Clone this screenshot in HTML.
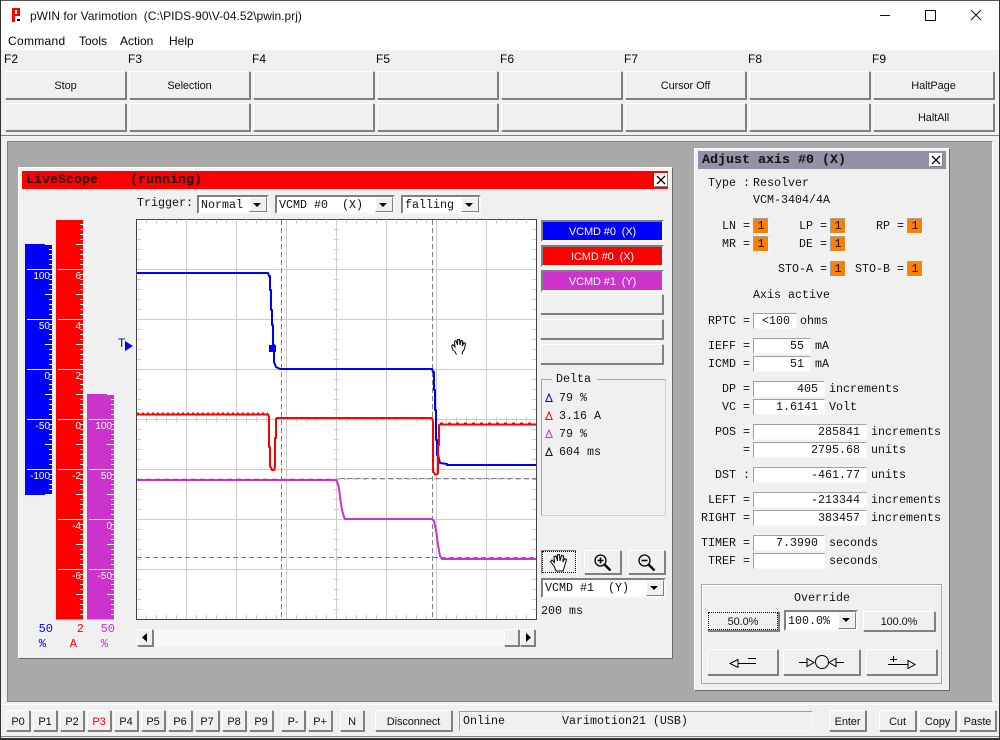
<!DOCTYPE html>
<html><head><meta charset="utf-8"><title>pWIN for Varimotion</title>
<style>
html,body{margin:0;padding:0;width:1000px;height:740px;overflow:hidden;background:#f0f0f0}
body{position:relative;font-family:"Liberation Sans",sans-serif;font-size:12px;color:#000}
div,span{box-sizing:border-box}
.a{position:absolute;white-space:pre;line-height:14px}
.m{position:absolute;white-space:pre;line-height:14px;font-family:"Liberation Mono",monospace;font-size:11.67px;color:#111}
.t{position:absolute;white-space:pre;line-height:14px;font-family:"Liberation Mono",monospace;font-size:13.33px;font-weight:bold;color:#200}
.b{position:absolute;background:#f0f0f0;border:1px solid;border-color:#fff #808080 #808080 #fff;box-shadow:1px 1px 0 #808080;display:flex;align-items:center;justify-content:center;font-size:11px;letter-spacing:-.1px;color:#111;white-space:pre;padding-top:2px}
.f{position:absolute;background:#fff;border:1px solid;border-color:#a0a0a0 #f8f8f8 #f8f8f8 #a0a0a0;font-family:"Liberation Mono",monospace;font-size:11.67px;line-height:14px;text-align:right;padding-right:6px;white-space:pre;color:#111}
.o{position:absolute;width:16px;height:16px;background:#ff8000;border:1px solid;border-color:#a0a0a0 #fff #fff #a0a0a0;font-family:"Liberation Mono",monospace;font-size:11.67px;line-height:14px;text-align:center;color:#111}
.s{position:absolute;background:#fff;border:2px solid;border-color:#808080 #f8f8f8 #f8f8f8 #808080;font-family:"Liberation Mono",monospace;font-size:11.67px;line-height:14px;padding-left:2px;padding-top:1px;white-space:pre;color:#111}
.s i{position:absolute;right:0;top:0;bottom:0;width:16px;background:#f0f0f0;border:1px solid;border-color:#fff #808080 #808080 #fff}
.s i:after{content:"";position:absolute;left:3px;top:5px;border:4px solid transparent;border-top:4px solid #000;border-bottom:0}
.c{position:absolute;width:14px;height:14px;background:#fff;border:1px solid;border-color:#fff #808080 #808080 #fff}
.k{position:absolute;left:0;top:0;width:100%;height:100%}
.l{position:absolute;text-align:right;right:250px;white-space:pre;line-height:14px;font-family:"Liberation Mono",monospace;font-size:11.67px;color:#111}
</style></head><body>
<div style="position:absolute;left:0;top:0;width:1000px;height:30px;background:#fff;border-top:1px solid #555"></div>
<div style="position:absolute;left:0;top:30px;width:1000px;height:20px;background:#fff"></div>
<svg style="position:absolute;left:0;top:0" width="1000" height="30" shape-rendering="crispEdges">
<path d="M12 8h8v8h-5v6h-3zM15 10v4h2v-4z" fill="#f00" fill-rule="evenodd"/><rect x="17" y="19" width="3" height="2" fill="#000"/>
<rect x="880" y="15" width="10" height="1" fill="#111"/>
<rect x="925.5" y="10.5" width="10" height="10" fill="none" stroke="#111"/>
<path d="M971 10L981 20M981 10L971 20" stroke="#111" shape-rendering="auto" fill="none"/>
</svg>
<div class="a" style="left:30px;top:9px;color:#111">pWIN for Varimotion  (C:\PIDS-90\V-04.52\pwin.prj)</div>
<div class="a" style="left:8px;top:34px;letter-spacing:.3px">Command</div>
<div class="a" style="left:79px;top:34px">Tools</div>
<div class="a" style="left:120px;top:34px">Action</div>
<div class="a" style="left:169px;top:34px">Help</div>

<div class="a" style="left:4px;top:52px">F2</div><div class="a" style="left:128px;top:52px">F3</div><div class="a" style="left:252px;top:52px">F4</div><div class="a" style="left:376px;top:52px">F5</div><div class="a" style="left:500px;top:52px">F6</div><div class="a" style="left:624px;top:52px">F7</div><div class="a" style="left:748px;top:52px">F8</div><div class="a" style="left:872px;top:52px">F9</div>

<div class="b" style="left:5px;top:71px;width:121px;height:28px">Stop</div>
<div class="b" style="left:129px;top:71px;width:121px;height:28px">Selection</div>
<div class="b" style="left:253px;top:71px;width:121px;height:28px"></div>
<div class="b" style="left:377px;top:71px;width:121px;height:28px"></div>
<div class="b" style="left:501px;top:71px;width:121px;height:28px"></div>
<div class="b" style="left:625px;top:71px;width:121px;height:28px">Cursor Off</div>
<div class="b" style="left:749px;top:71px;width:121px;height:28px"></div>
<div class="b" style="left:873px;top:71px;width:121px;height:28px">HaltPage</div>
<div class="b" style="left:5px;top:103px;width:121px;height:28px"></div>
<div class="b" style="left:129px;top:103px;width:121px;height:28px"></div>
<div class="b" style="left:253px;top:103px;width:121px;height:28px"></div>
<div class="b" style="left:377px;top:103px;width:121px;height:28px"></div>
<div class="b" style="left:501px;top:103px;width:121px;height:28px"></div>
<div class="b" style="left:625px;top:103px;width:121px;height:28px"></div>
<div class="b" style="left:749px;top:103px;width:121px;height:28px"></div>
<div class="b" style="left:873px;top:103px;width:121px;height:28px">HaltAll</div>

<div style="position:absolute;left:0;top:135px;width:1000px;height:1px;background:#808080"></div>
<div style="position:absolute;left:7px;top:141px;width:986px;height:561px;background:#a9a9a9;border:1px solid;border-color:#808080 #fff #808080 #808080"></div>

<!-- LiveScope panel -->
<div style="position:absolute;left:18px;top:167px;width:655px;height:492px;background:#f0f0f0;border:1px solid;border-color:#fff #696969 #696969 #fff"></div>
<div style="position:absolute;left:22px;top:171px;width:646px;height:18px;background:#f00"></div>
<div class="t" style="left:26px;top:174px">LiveScope    (running)</div>
<div class="c" style="left:654px;top:173px"><svg class="k" viewBox="0 0 12 12"><path d="M2 2L10 10M10 2L2 10" stroke="#000" stroke-width="1.3"/></svg></div>

<div class="m" style="left:137px;top:196px">Trigger:</div>
<div class="s" style="left:197px;top:195px;width:72px;height:19px">Normal<i></i></div>
<div class="s" style="left:275px;top:195px;width:120px;height:19px">VCMD #0  (X)<i></i></div>
<div class="s" style="left:401px;top:195px;width:80px;height:19px">falling<i></i></div>

<svg style="position:absolute;left:0;top:0" width="1000" height="740">
<!-- bars -->
<g shape-rendering="crispEdges">
<rect x="25" y="244" width="27" height="251" fill="#00f"/>
<rect x="56" y="220" width="27" height="399.500" fill="#f00"/>
<rect x="87" y="394" width="27" height="225.500" fill="#c3c"/>
<g stroke="#fff" fill="none">
<line x1="50.500" x2="50.500" y1="249" y2="495" stroke-width="3" stroke-dasharray="1 4"/>
<line x1="48.500" x2="48.500" y1="244" y2="495" stroke-width="7" stroke-dasharray="1 24"/>
<line x1="39.500" x2="39.500" y1="269" y2="495" stroke-width="25" stroke-dasharray="1 49"/>
<line x1="81.500" x2="81.500" y1="224" y2="619" stroke-width="3" stroke-dasharray="1 4"/>
<line x1="79.500" x2="79.500" y1="244" y2="619" stroke-width="7" stroke-dasharray="1 24"/>
<line x1="70.500" x2="70.500" y1="269" y2="619" stroke-width="25" stroke-dasharray="1 49"/>
<line x1="112.500" x2="112.500" y1="399" y2="619" stroke-width="3" stroke-dasharray="1 4"/>
<line x1="110.500" x2="110.500" y1="394" y2="619" stroke-width="7" stroke-dasharray="1 24"/>
<line x1="101.500" x2="101.500" y1="419" y2="619" stroke-width="25" stroke-dasharray="1 49"/>
</g>
</g>
<g font-family="Liberation Sans, sans-serif" font-size="10" fill="#fff" text-anchor="end">
<text x="50" y="279">100</text><text x="50" y="329">50</text><text x="50" y="379">0</text><text x="50" y="429">-50</text><text x="50" y="479">-100</text>
<text x="81" y="279">6</text><text x="81" y="329">4</text><text x="81" y="379">2</text><text x="81" y="429">0</text><text x="81" y="479">-2</text><text x="81" y="529">-4</text><text x="81" y="579">-6</text>
<text x="112" y="429">100</text><text x="112" y="479">50</text><text x="112" y="529">0</text><text x="112" y="579">-50</text>
</g>
<g font-family="Liberation Mono, monospace" font-size="12" text-anchor="end">
<text x="53" y="632" fill="#00f">50</text><text x="46" y="647" fill="#00f">%</text>
<text x="84" y="632" fill="#f00">2</text><text x="77" y="647" fill="#f00">A</text>
<text x="115" y="632" fill="#c3c">50</text><text x="108" y="647" fill="#c3c">%</text>
</g>
<!-- T marker -->
<text x="118" y="347" font-family="Liberation Sans, sans-serif" font-size="12" fill="#00f">T</text>
<path d="M125 341L133 346L125 351Z" fill="#00f"/>

<!-- plot -->
<g shape-rendering="crispEdges">
<rect x="136.500" y="219.500" width="400" height="400" fill="#fff" stroke="#444"/>
<g stroke="#ccc" fill="none">
<path d="M186.500 220V619M236.500 220V619M286.500 220V619M336.500 220V619M386.500 220V619M436.500 220V619M486.500 220V619"/>
<path d="M137 269.500H536M137 319.500H536M137 369.500H536M137 419.500H536M137 469.500H536M137 519.500H536M137 569.500H536"/>
<line x1="139" x2="139" y1="229" y2="619" stroke-width="4" stroke-dasharray="1 9"/>
<line x1="534" x2="534" y1="229" y2="619" stroke-width="4" stroke-dasharray="1 9"/>
<line x1="336.500" x2="336.500" y1="229" y2="619" stroke-width="5" stroke-dasharray="1 9"/>
<line y1="221.500" y2="221.500" x1="146" x2="536" stroke-width="4" stroke-dasharray="1 9"/>
<line y1="617" y2="617" x1="146" x2="536" stroke-width="4" stroke-dasharray="1 9"/>
<line y1="419.500" y2="419.500" x1="146" x2="536" stroke-width="5" stroke-dasharray="1 9"/>
</g>
<g stroke="#808080" fill="none" stroke-dasharray="5 3">
<path d="M281.500 220V619M432.500 220V619"/>
<path d="M137 557.500H536"/>
</g>
</g>
<g fill="none" stroke-width="2" shape-rendering="crispEdges">
<path stroke="#c3c" d="M137 480H335"/>
<path stroke="#909" stroke-opacity=".45" stroke-dasharray="5 4" d="M137 479H536" stroke-width="1"/>
<path stroke="#808080" stroke-dasharray="5 3" stroke-width="1" d="M340 478.500H536"/>
<path stroke="#f00" stroke-dasharray="2 3" stroke-width="1" d="M137 413H268"/>
<path stroke="#f00" stroke-dasharray="3 5" stroke-width="1" d="M440 423H537"/>
</g>
<g fill="none" stroke-width="2" stroke-linejoin="round">
<path stroke="#c3c" d="M335 480L337 481L339 488L340 497L342 510L344 517L345 519H432L434 521L436 530L438 545L440 556L442 559H536"/>
<path stroke="#00f" d="M137 273H268L269 276H270V290H271V310H272V325H273V345H274V362L276 367L280 369H432L433 372H434V390H435V410H436V440H437V455H438L440 463L447 464V465H536"/>
<path stroke="#f00" d="M137 414.500H268L269 417V447H270V466L272 470H274L275 467V438H276V419L277 418H432L433 422V471L435 474.500H437L438 473V445H439V425L440 424.500H536"/>
</g>
<rect x="269" y="345" width="7" height="7" fill="#00f" shape-rendering="crispEdges"/>
<!-- hand cursor on plot -->
<g fill="none" stroke="#000" stroke-width="1">
<path d="M453.500 351L451.500 346L453 344.500L455 347L454.500 341.500L456 340.500L457.500 345L457.700 339.500H459.500L460 345L461 340.500L462.700 341L462.300 346L464 342.500L465.500 343.500L464.500 349L462.500 352L462 354.500M454.500 351L456.500 354.500"/>
</g>
</svg>

<!-- scrollbar -->
<div style="position:absolute;left:153px;top:629px;width:351px;height:18px;background:#f7f7f7"></div>
<div class="b" style="left:137px;top:629px;width:16px;height:17px;padding-top:0"><svg width="8" height="10"><path d="M6 0V9L1 4.500Z" fill="#000"/></svg></div>
<div class="b" style="left:504px;top:629px;width:15px;height:17px"></div>
<div class="b" style="left:520px;top:629px;width:15px;height:17px;padding-top:0"><svg width="8" height="10"><path d="M2 0V9L7 4.500Z" fill="#000"/></svg></div>

<!-- channel buttons -->
<div class="b" style="left:541px;top:220px;width:123px;height:22px;background:#00f;color:#fff;border:2px solid;border-color:#808080 #f8f8f8 #f8f8f8 #808080;box-shadow:none">VCMD #0  (X)</div>
<div class="b" style="left:541px;top:245px;width:123px;height:22px;background:#f00;color:#fff;border:2px solid;border-color:#808080 #f8f8f8 #f8f8f8 #808080;box-shadow:none">ICMD #0  (X)</div>
<div class="b" style="left:541px;top:270px;width:123px;height:22px;background:#c3c;color:#fff;border:2px solid;border-color:#808080 #f8f8f8 #f8f8f8 #808080;box-shadow:none">VCMD #1  (Y)</div>
<div class="b" style="left:540px;top:294px;width:123px;height:20px"></div>
<div class="b" style="left:540px;top:319px;width:123px;height:20px"></div>
<div class="b" style="left:540px;top:344px;width:123px;height:20px"></div>

<!-- delta -->
<div style="position:absolute;left:541px;top:379px;width:125px;height:137px;border:1px solid;border-color:#a8a8a8 #d0d0d0 #d0d0d0 #a8a8a8"></div>
<div class="m" style="left:552px;top:372px;background:#f0f0f0;padding:0 6px 0 4px">Delta</div>
<svg style="position:absolute;left:545px;top:392px" width="10" height="66" fill="none">
<path d="M4 2L.8 9.500H7.200Z" stroke="#00f"/><path d="M4 20L.8 27.500H7.200Z" stroke="#f00"/><path d="M4 38L.8 45.500H7.200Z" stroke="#c3c"/><path d="M4 56L.8 63.500H7.200Z" stroke="#111"/>
</svg>
<div class="m" style="left:559px;top:391px">79 %</div>
<div class="m" style="left:559px;top:409px">3.16 A</div>
<div class="m" style="left:559px;top:427px">79 %</div>
<div class="m" style="left:559px;top:445px">604 ms</div>

<!-- tool buttons -->
<div class="b" style="left:541px;top:550px;width:36px;height:24px;border-color:#808080 #fff #fff #808080;box-shadow:none;outline:1px dotted #000;outline-offset:-2px">
<svg width="20" height="20" viewBox="0 0 20 20"><path d="M5 13L1.500 8.500L3 7L5.500 9.500L5 3.500L7 3L8.500 8L8.500 1.800H10.500L11 8L12.500 2.500L14.500 3L13.800 9L15.800 5.500L17.500 6.500L15.500 13.500L14 18H7Z" fill="#fff" stroke="#000"/></svg></div>
<div class="b" style="left:584px;top:550px;width:37px;height:24px">
<svg width="20" height="20" viewBox="0 0 20 20" fill="none" stroke="#000"><circle cx="7.500" cy="7.500" r="5.500" stroke-width="1.300"/><path d="M4.500 7.500H10.500M7.500 4.500V10.500" stroke-width="1.600"/><path d="M11.500 11.500L17.500 17.500" stroke-width="2.400"/></svg></div>
<div class="b" style="left:628px;top:550px;width:37px;height:24px">
<svg width="20" height="20" viewBox="0 0 20 20" fill="none" stroke="#000"><circle cx="7.500" cy="7.500" r="5.500" stroke-width="1.300"/><path d="M4.500 7.500H10.500" stroke-width="1.600"/><path d="M11.500 11.500L17.500 17.500" stroke-width="2.400"/></svg></div>
<div class="s" style="left:541px;top:578px;width:125px;height:20px">VCMD #1  (Y)<i></i></div>
<div class="m" style="left:541px;top:604px">200 ms</div>

<!-- Adjust panel -->
<div style="position:absolute;left:694px;top:148px;width:256px;height:543px;background:#f0f0f0;border:1px solid;border-color:#fff #696969 #696969 #fff"></div>
<div style="position:absolute;left:698px;top:151px;width:248px;height:18px;background:#9292a6"></div>
<div class="t" style="left:702px;top:154px;color:#111">Adjust axis #0 (X)</div>
<div class="c" style="left:929px;top:153px"><svg class="k" viewBox="0 0 12 12"><path d="M2 2L10 10M10 2L2 10" stroke="#000" stroke-width="1.300"/></svg></div>

<div class="m" style="left:708px;top:176px">Type :</div><div class="m" style="left:753px;top:176px">Resolver</div>
<div class="m" style="left:753px;top:193px">VCM-3404/4A</div>
<div class="m" style="left:722px;top:219px">LN =</div><div class="o" style="left:753px;top:218px">1</div>
<div class="m" style="left:799px;top:219px">LP =</div><div class="o" style="left:830px;top:218px">1</div>
<div class="m" style="left:876px;top:219px">RP =</div><div class="o" style="left:907px;top:218px">1</div>
<div class="m" style="left:722px;top:237px">MR =</div><div class="o" style="left:753px;top:236px">1</div>
<div class="m" style="left:799px;top:237px">DE =</div><div class="o" style="left:830px;top:236px">1</div>
<div class="m" style="left:778px;top:262px">STO-A =</div><div class="o" style="left:830px;top:261px">1</div>
<div class="m" style="left:855px;top:262px">STO-B =</div><div class="o" style="left:907px;top:261px">1</div>
<div class="m" style="left:753px;top:288px">Axis active</div>

<div class="l" style="top:314px">RPTC =</div><div class="f" style="left:753px;top:313px;width:44px;height:16px">&lt;100</div><div class="m" style="left:800px;top:314px">ohms</div>
<div class="l" style="top:339px">IEFF =</div><div class="f" style="left:753px;top:338px;width:58px;height:16px">55</div><div class="m" style="left:815px;top:339px">mA</div>
<div class="l" style="top:357px">ICMD =</div><div class="f" style="left:753px;top:356px;width:58px;height:16px">51</div><div class="m" style="left:815px;top:357px">mA</div>
<div class="l" style="top:382px">DP =</div><div class="f" style="left:753px;top:381px;width:72px;height:16px">405</div><div class="m" style="left:829px;top:382px">increments</div>
<div class="l" style="top:400px">VC =</div><div class="f" style="left:753px;top:399px;width:72px;height:16px">1.6141</div><div class="m" style="left:829px;top:400px">Volt</div>
<div class="l" style="top:425px">POS =</div><div class="f" style="left:753px;top:424px;width:114px;height:16px">285841</div><div class="m" style="left:871px;top:425px">increments</div>
<div class="l" style="top:443px">=</div><div class="f" style="left:753px;top:442px;width:114px;height:16px">2795.68</div><div class="m" style="left:871px;top:443px">units</div>
<div class="l" style="top:468px">DST :</div><div class="f" style="left:753px;top:467px;width:114px;height:16px">-461.77</div><div class="m" style="left:871px;top:468px">units</div>
<div class="l" style="top:493px">LEFT =</div><div class="f" style="left:753px;top:492px;width:114px;height:16px">-213344</div><div class="m" style="left:871px;top:493px">increments</div>
<div class="l" style="top:511px">RIGHT =</div><div class="f" style="left:753px;top:510px;width:114px;height:16px">383457</div><div class="m" style="left:871px;top:511px">increments</div>
<div class="l" style="top:536px">TIMER =</div><div class="f" style="left:753px;top:535px;width:72px;height:16px">7.3990</div><div class="m" style="left:829px;top:536px">seconds</div>
<div class="l" style="top:554px">TREF =</div><div class="f" style="left:753px;top:553px;width:72px;height:16px"></div><div class="m" style="left:829px;top:554px">seconds</div>

<!-- Override -->
<div style="position:absolute;left:701px;top:584px;width:241px;height:100px;border:1px solid;border-color:#a8a8a8;box-shadow:inset 1px 1px 0 #fff"></div>
<div class="m" style="left:794px;top:591px">Override</div>
<div class="b" style="left:707px;top:611px;width:72px;height:20px;outline:1px dotted #000;outline-offset:-2px">50.0%</div>
<div class="s" style="left:784px;top:610px;width:74px;height:21px;padding-top:2px">100.0%<i></i></div>
<div class="b" style="left:863px;top:611px;width:72px;height:20px">100.0%</div>
<div class="b" style="left:707px;top:649px;width:71px;height:26px"><svg width="30" height="14" fill="none" stroke="#000"><path d="M10 3.500L2 7.500L10 11.500ZM10 7.500H28M20 2.500H28"/></svg></div>
<div class="b" style="left:783px;top:649px;width:77px;height:26px;padding-top:0"><svg width="48" height="16" fill="none" stroke="#000"><path d="M1 8.500H9M9 4.500V12.500L16 8.500ZM31 8.500L38 4.500V12.500ZM38 8.500H46"/><circle cx="24" cy="8" r="6.500"/></svg></div>
<div class="b" style="left:866px;top:649px;width:71px;height:26px;padding-top:0"><svg width="30" height="16" fill="none" stroke="#000"><path d="M1 10.500H21M21 6.500V14.500L28 10.500ZM3 5.500H10M6.500 2V8"/></svg></div>

<!-- status bar -->
<div style="position:absolute;left:0;top:704px;width:1000px;height:1px;background:#fff"></div>
<div class="b" style="left:6px;top:710px;width:24px;height:21px">P0</div>
<div class="b" style="left:33px;top:710px;width:24px;height:21px">P1</div>
<div class="b" style="left:60px;top:710px;width:24px;height:21px">P2</div>
<div class="b" style="left:87px;top:710px;width:24px;height:21px;color:#f00">P3</div>
<div class="b" style="left:114px;top:710px;width:24px;height:21px">P4</div>
<div class="b" style="left:141px;top:710px;width:24px;height:21px">P5</div>
<div class="b" style="left:168px;top:710px;width:24px;height:21px">P6</div>
<div class="b" style="left:195px;top:710px;width:24px;height:21px">P7</div>
<div class="b" style="left:222px;top:710px;width:24px;height:21px">P8</div>
<div class="b" style="left:249px;top:710px;width:24px;height:21px">P9</div>
<div class="b" style="left:281px;top:710px;width:24px;height:21px">P-</div>
<div class="b" style="left:308px;top:710px;width:24px;height:21px">P+</div>
<div class="b" style="left:340px;top:710px;width:24px;height:21px">N</div>
<div class="b" style="left:375px;top:710px;width:77px;height:21px">Disconnect</div>
<div style="position:absolute;left:459px;top:711px;width:354px;height:20px;border:1px solid;border-color:#a0a0a0 #f8f8f8 #f8f8f8 #a0a0a0"></div>
<div class="m" style="left:463px;top:714px">Online</div>
<div class="m" style="left:562px;top:714px">Varimotion21 (USB)</div>
<div class="b" style="left:829px;top:710px;width:37px;height:21px">Enter</div>
<div class="b" style="left:879px;top:710px;width:37px;height:21px">Cut</div>
<div class="b" style="left:919px;top:710px;width:37px;height:21px">Copy</div>
<div class="b" style="left:959px;top:710px;width:37px;height:21px">Paste</div>

<div style="position:absolute;left:0;top:736px;width:1000px;height:1px;background:#808080"></div>
<div style="position:absolute;left:0;top:738px;width:1000px;height:2px;background:#333"></div>
<div style="position:absolute;left:0;top:0;width:1px;height:740px;background:#333"></div>
<div style="position:absolute;right:0;top:0;width:1px;height:740px;background:#333"></div>
</body></html>
